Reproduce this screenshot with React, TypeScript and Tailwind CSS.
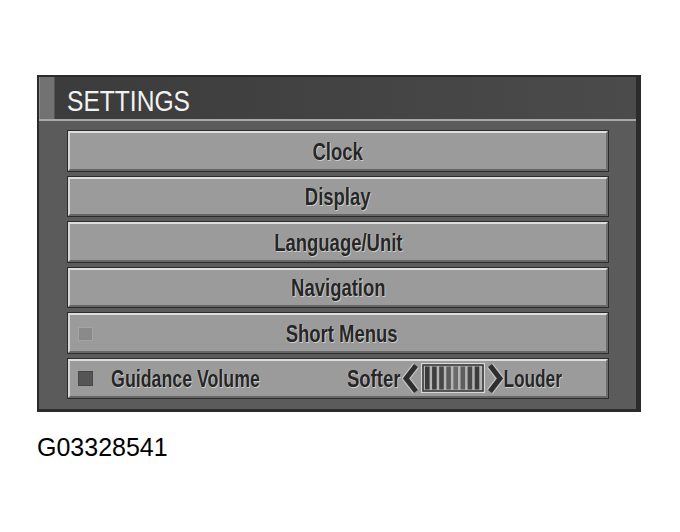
import React from "react";

const font = "font-['Liberation_Sans',Arial,sans-serif]";
const labelShadow = "[text-shadow:1px_1px_0_#cdcdcd,-1px_0_0_#b8b8b8]";

function Bevel({ children }: { children: React.ReactNode }) {
  return (
    <div className="flex-1 border border-[#2c2c2c] flex">
      <div className="flex-1 flex border-t-2 border-l-2 border-t-[#dedede] border-l-[#d6d6d6] border-b-2 border-r-2 border-b-[#666] border-r-[#6e6e6e] bg-[#9b9b9b]">
        {children}
      </div>
    </div>
  );
}

function Label({ text }: { text: string }) {
  return (
    <span
      className={`inline-block whitespace-nowrap scale-x-[0.77] text-[24px] leading-none font-bold text-[#262626] ${labelShadow} ${font}`}
    >
      {text}
    </span>
  );
}

function MenuButton({ text }: { text: string }) {
  return (
    <Bevel>
      <div className="flex-1 flex items-center justify-center pt-[2px]">
        <Label text={text} />
      </div>
    </Bevel>
  );
}

function Chevron({ dir }: { dir: "left" | "right" }) {
  const d = dir === "left" ? "M14 2 L4 15 L14 28" : "M3 2 L13 15 L3 28";
  return (
    <svg width="17" height="31" viewBox="0 0 17 30" className="shrink-0">
      <path d={d} fill="none" stroke="#c4c4c4" strokeWidth="7.5" strokeLinejoin="miter" />
      <path d={d} fill="none" stroke="#2e2e2e" strokeWidth="5" strokeLinejoin="miter" />
    </svg>
  );
}

function VolumeBar() {
  const bars = ["#3a3a3a", "#3e3e3e", "#474747", "#5c5c5c", "#6a6a6a", "#5e5e5e", "#4a4a4a", "#3c3c3c"];
  return (
    <svg width="64" height="30" viewBox="0 0 64 30" className="shrink-0 mx-[2px]">
      <rect x="0.5" y="0.5" width="63" height="29" fill="#bdbdbd" stroke="#d8d8d8" />
      <rect x="2" y="2" width="60" height="26" fill="#b4b4b4" stroke="#333" strokeWidth="1.5" />
      {bars.map((c, i) => (
        <rect key={i} x={4 + i * 7.1} y="3.5" width="4.6" height="23" fill={c} />
      ))}
    </svg>
  );
}

export default function App() {
  return (
    <div className="w-[680px] h-[532px] bg-white pt-[75px] pl-[37px]">
      <div className="w-[604px] h-[337px] flex flex-col bg-[#5b5b5b] border-t-2 border-l-2 border-r-[5px] border-b-[3px] border-[#2b2b2b]">
        <div className="h-[44px] flex bg-gradient-to-r from-[#3b3b3b] to-[#4b4b4b] border-b-2 border-[#a8a8a8]">
          <div className="w-[16px] bg-[#727272] border-l border-r border-l-[#8c8c8c] border-r-[#555]" />
          <div className="flex items-center pl-[12px] pt-[6px]">
            <span
              className={`inline-block origin-left scale-x-[0.82] text-[30px] leading-none text-[#f2f2f2] ${font}`}
            >
              SETTINGS
            </span>
          </div>
        </div>

        <div className="flex-1 flex flex-col gap-[4px] pl-[28px] pr-[27px] pt-[9px] pb-[10px]">
          <MenuButton text="Clock" />
          <MenuButton text="Display" />
          <MenuButton text="Language/Unit" />
          <MenuButton text="Navigation" />
          <Bevel>
            <div className="flex-1 grid grid-cols-[1fr_auto_1fr] items-center pl-[8px] pt-[2px]">
              <div className="w-[15px] h-[14px] bg-[#8a8a8a] border border-[#a4a4a4]" />
              <Label text="Short Menus" />
              <div />
            </div>
          </Bevel>
          <Bevel>
            <div className="flex-1 flex items-center pl-[8px] pr-[44px]">
              <div className="w-[15px] h-[15px] bg-[#555] border border-[#474747] shrink-0" />
              <div className="ml-[17px] w-[150px] flex justify-center pt-[2px]">
                <span
                  className={`inline-block whitespace-nowrap scale-x-[0.74] text-[24px] leading-none font-bold text-[#262626] ${labelShadow} ${font}`}
                >
                  Guidance Volume
                </span>
              </div>
              <div className="flex-1" />
              <div className="w-[56px] flex justify-center pt-[2px]">
                <Label text="Softer" />
              </div>
              <Chevron dir="left" />
              <VolumeBar />
              <Chevron dir="right" />
              <div className="w-[58px] flex justify-center pt-[2px]">
                <span
                  className={`inline-block whitespace-nowrap scale-x-[0.72] text-[24px] leading-none font-bold text-[#262626] ${labelShadow} ${font}`}
                >
                  Louder
                </span>
              </div>
            </div>
          </Bevel>
        </div>
      </div>

      <div className={`mt-[23px] text-[25px] leading-none text-black ${font}`}>G03328541</div>
    </div>
  );
}
